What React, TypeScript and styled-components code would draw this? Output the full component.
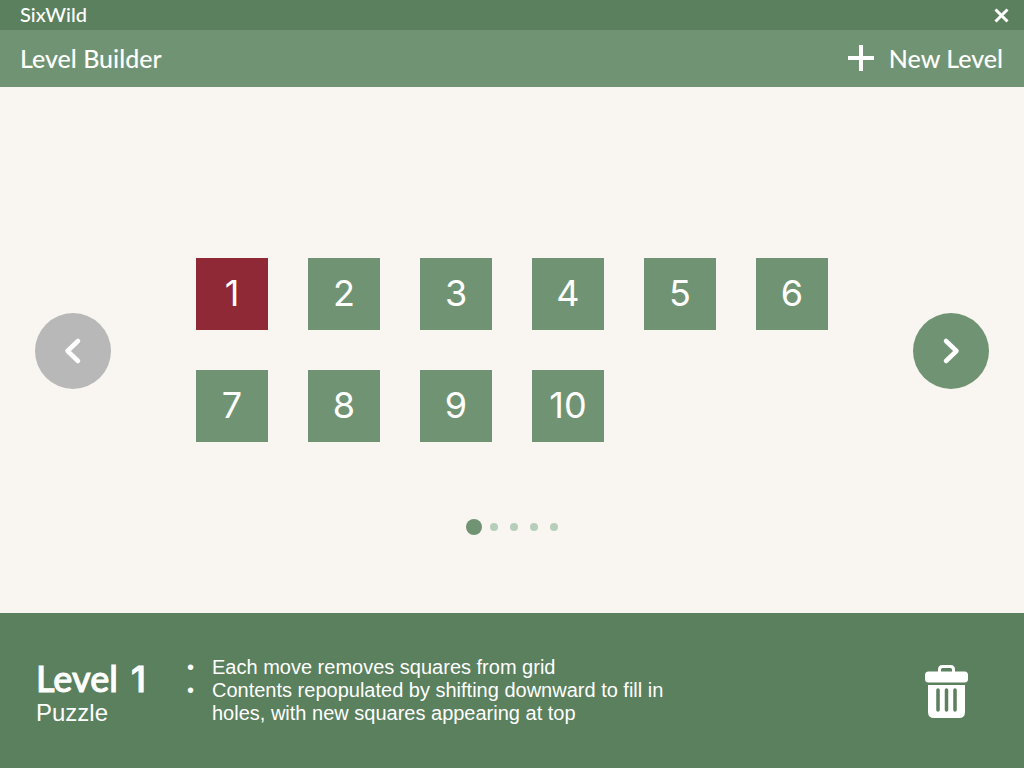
import React, { useState } from "react";
import styled, { createGlobalStyle } from "styled-components";

const GlobalStyle = createGlobalStyle`
  * { box-sizing: border-box; }
  body { margin: 0; }
  button { border: 0; padding: 0; background: none; color: inherit; font: inherit; cursor: pointer; }
  h1, h2, p, ul { margin: 0; padding: 0; font-weight: inherit; }
  svg { display: block; fill: none; stroke: #fff; }
`;

const brand = 'Avenir, Lato, "Liberation Sans", sans-serif';
const numerals = 'Avenir, Inter, "Liberation Sans", sans-serif';
const body = 'Helvetica, "Liberation Sans", Arial, sans-serif';

const Page = styled.div`
  display: flex;
  flex-direction: column;
  min-height: 100vh;
  background: #f9f5f0;
  color: #fff;
  font-family: ${brand};
  font-weight: 500;
`;

const TitleBar = styled.header`
  display: flex;
  align-items: center;
  justify-content: space-between;
  height: 30px;
  padding: 0 15px 0 20px;
  background: #5a805e;
  font-size: 20px;
  line-height: 28px;
`;

const AppName = styled.span`
  padding-bottom: 2px;
`;

const Toolbar = styled.div`
  display: flex;
  align-items: center;
  justify-content: space-between;
  height: 57px;
  padding: 0 21px 2px 20px;
  background: #709473;
  font-size: 25px;
  line-height: 32px;
`;

const ToolbarTitle = styled.h1`
  font-size: 25px;
`;

const NewLevel = styled.button`
  display: flex;
  align-items: center;
  gap: 14px;
`;

const Main = styled.main`
  flex: 1;
  display: grid;
  grid-template-rows: 1fr auto 1fr;
`;

const Carousel = styled.div`
  grid-row: 2;
  display: flex;
  align-items: center;
  justify-content: space-between;
  padding: 0 35px;
`;

const Arrow = styled.button`
  display: grid;
  place-items: center;
  width: 76px;
  height: 76px;
  margin-top: 2px;
  border-radius: 50%;
  background: #709473;
  &:disabled { background: #b8b8b8; cursor: default; }
`;

const Levels = styled.div`
  display: grid;
  grid-template-columns: repeat(6, 72px);
  gap: 40px;
`;

const LevelTile = styled.button<{ $selected: boolean }>`
  height: 72px;
  padding-bottom: 2px;
  background: ${(p) => (p.$selected ? "#8e2935" : "#709473")};
  font-family: ${numerals};
  font-size: 36px;
  font-weight: 400;
  line-height: 70px;
  text-align: center;
`;

const Pager = styled.nav`
  grid-row: 3;
  display: flex;
  align-items: center;
  align-self: start;
  justify-content: center;
  gap: 12px;
  padding-top: 77px;
`;

const Dot = styled.button<{ $current: boolean }>`
  width: ${(p) => (p.$current ? 16 : 8)}px;
  height: ${(p) => (p.$current ? 16 : 8)}px;
  margin-right: ${(p) => (p.$current ? -4 : 0)}px;
  border-radius: 50%;
  background: ${(p) => (p.$current ? "#709473" : "#b5cfba")};
`;

const Details = styled.footer`
  display: flex;
  align-items: center;
  justify-content: space-between;
  min-height: 155px;
  padding: 0 56px 0 36px;
  background: #5a805e;
  font-family: ${body};
`;

const Description = styled.div`
  display: flex;
  align-items: center;
`;

const Summary = styled.div`
  width: 151px;
  flex: none;
  padding-top: 4px;
`;

const LevelName = styled.h2`
  font-family: ${brand};
  font-size: 36px;
  line-height: 40px;
  -webkit-text-stroke: 1px #fff;
`;

const LevelNumber = styled.span`
  margin-left: 4px;
  font-family: ${numerals};
`;

const LevelType = styled.p`
  font-size: 24px;
  line-height: 28px;
`;

const Rules = styled.ul`
  max-width: 485px;
  list-style: none;
  font-size: 20px;
  line-height: 23px;
`;

const Rule = styled.li`
  display: grid;
  grid-template-columns: 25px 1fr;
  &::before { content: "•"; }
`;

const DeleteButton = styled.button`
  margin-top: 2px;
`;

export default function App() {
  const [selected, setSelected] = useState(1);
  const levels = Array.from({ length: 10 }, (_, i) => i + 1);
  return (
    <Page>
      <GlobalStyle />
      <TitleBar>
        <AppName>SixWild</AppName>
        <button aria-label="Close">
          <svg width="15" height="15" viewBox="0 0 15 15" strokeWidth="3">
            <path d="M1.5 1.5 13.5 13.5M13.5 1.5 1.5 13.5" />
          </svg>
        </button>
      </TitleBar>
      <Toolbar>
        <ToolbarTitle>Level Builder</ToolbarTitle>
        <NewLevel>
          <svg width="28" height="28" viewBox="0 0 28 28" strokeWidth="4">
            <path d="M14 1V27M1 14H27" />
          </svg>
          New Level
        </NewLevel>
      </Toolbar>
      <Main>
        <Carousel>
          <Arrow disabled aria-label="Previous page">
            <svg width="76" height="76" viewBox="0 0 76 76" strokeWidth="4.5" strokeLinecap="round" strokeLinejoin="round">
              <path d="M43 28 32.500 38 43 48" />
            </svg>
          </Arrow>
          <Levels>
            {levels.map((n) => (
              <LevelTile key={n} $selected={n === selected} onClick={() => setSelected(n)}>
                {n}
              </LevelTile>
            ))}
          </Levels>
          <Arrow aria-label="Next page">
            <svg width="76" height="76" viewBox="0 0 76 76" strokeWidth="4.5" strokeLinecap="round" strokeLinejoin="round">
              <path d="M33 28 43.500 38 33 48" />
            </svg>
          </Arrow>
        </Carousel>
        <Pager aria-label="Pages">
          {[1, 2, 3, 4, 5].map((n) => (
            <Dot key={n} $current={n === 1} aria-label={`Page ${n}`} />
          ))}
        </Pager>
      </Main>
      <Details>
        <Description>
          <Summary>
            <LevelName>
              Level <LevelNumber>{selected}</LevelNumber>
            </LevelName>
            <LevelType>Puzzle</LevelType>
          </Summary>
          <Rules>
            <Rule>Each move removes squares from grid</Rule>
            <Rule>Contents repopulated by shifting downward to fill in holes, with new squares appearing at top</Rule>
          </Rules>
        </Description>
        <DeleteButton aria-label="Delete level">
          <svg width="43" height="53" viewBox="0 0 43 53">
            <path d="M14.5 8V4.5Q14.5 1.5 17.5 1.5H25.5Q28.5 1.5 28.5 4.5V8" strokeWidth="3" />
            <rect x="0" y="6.5" width="43" height="11" rx="3.5" fill="#fff" stroke="none" />
            <path d="M3 20H40V47Q40 53 34 53H9Q3 53 3 47Z" fill="#fff" stroke="none" />
            <path d="M13 25V45M21.5 25V45M30 25V45" stroke="#5a805e" strokeWidth="3.5" strokeLinecap="round" />
          </svg>
        </DeleteButton>
      </Details>
    </Page>
  );
}
